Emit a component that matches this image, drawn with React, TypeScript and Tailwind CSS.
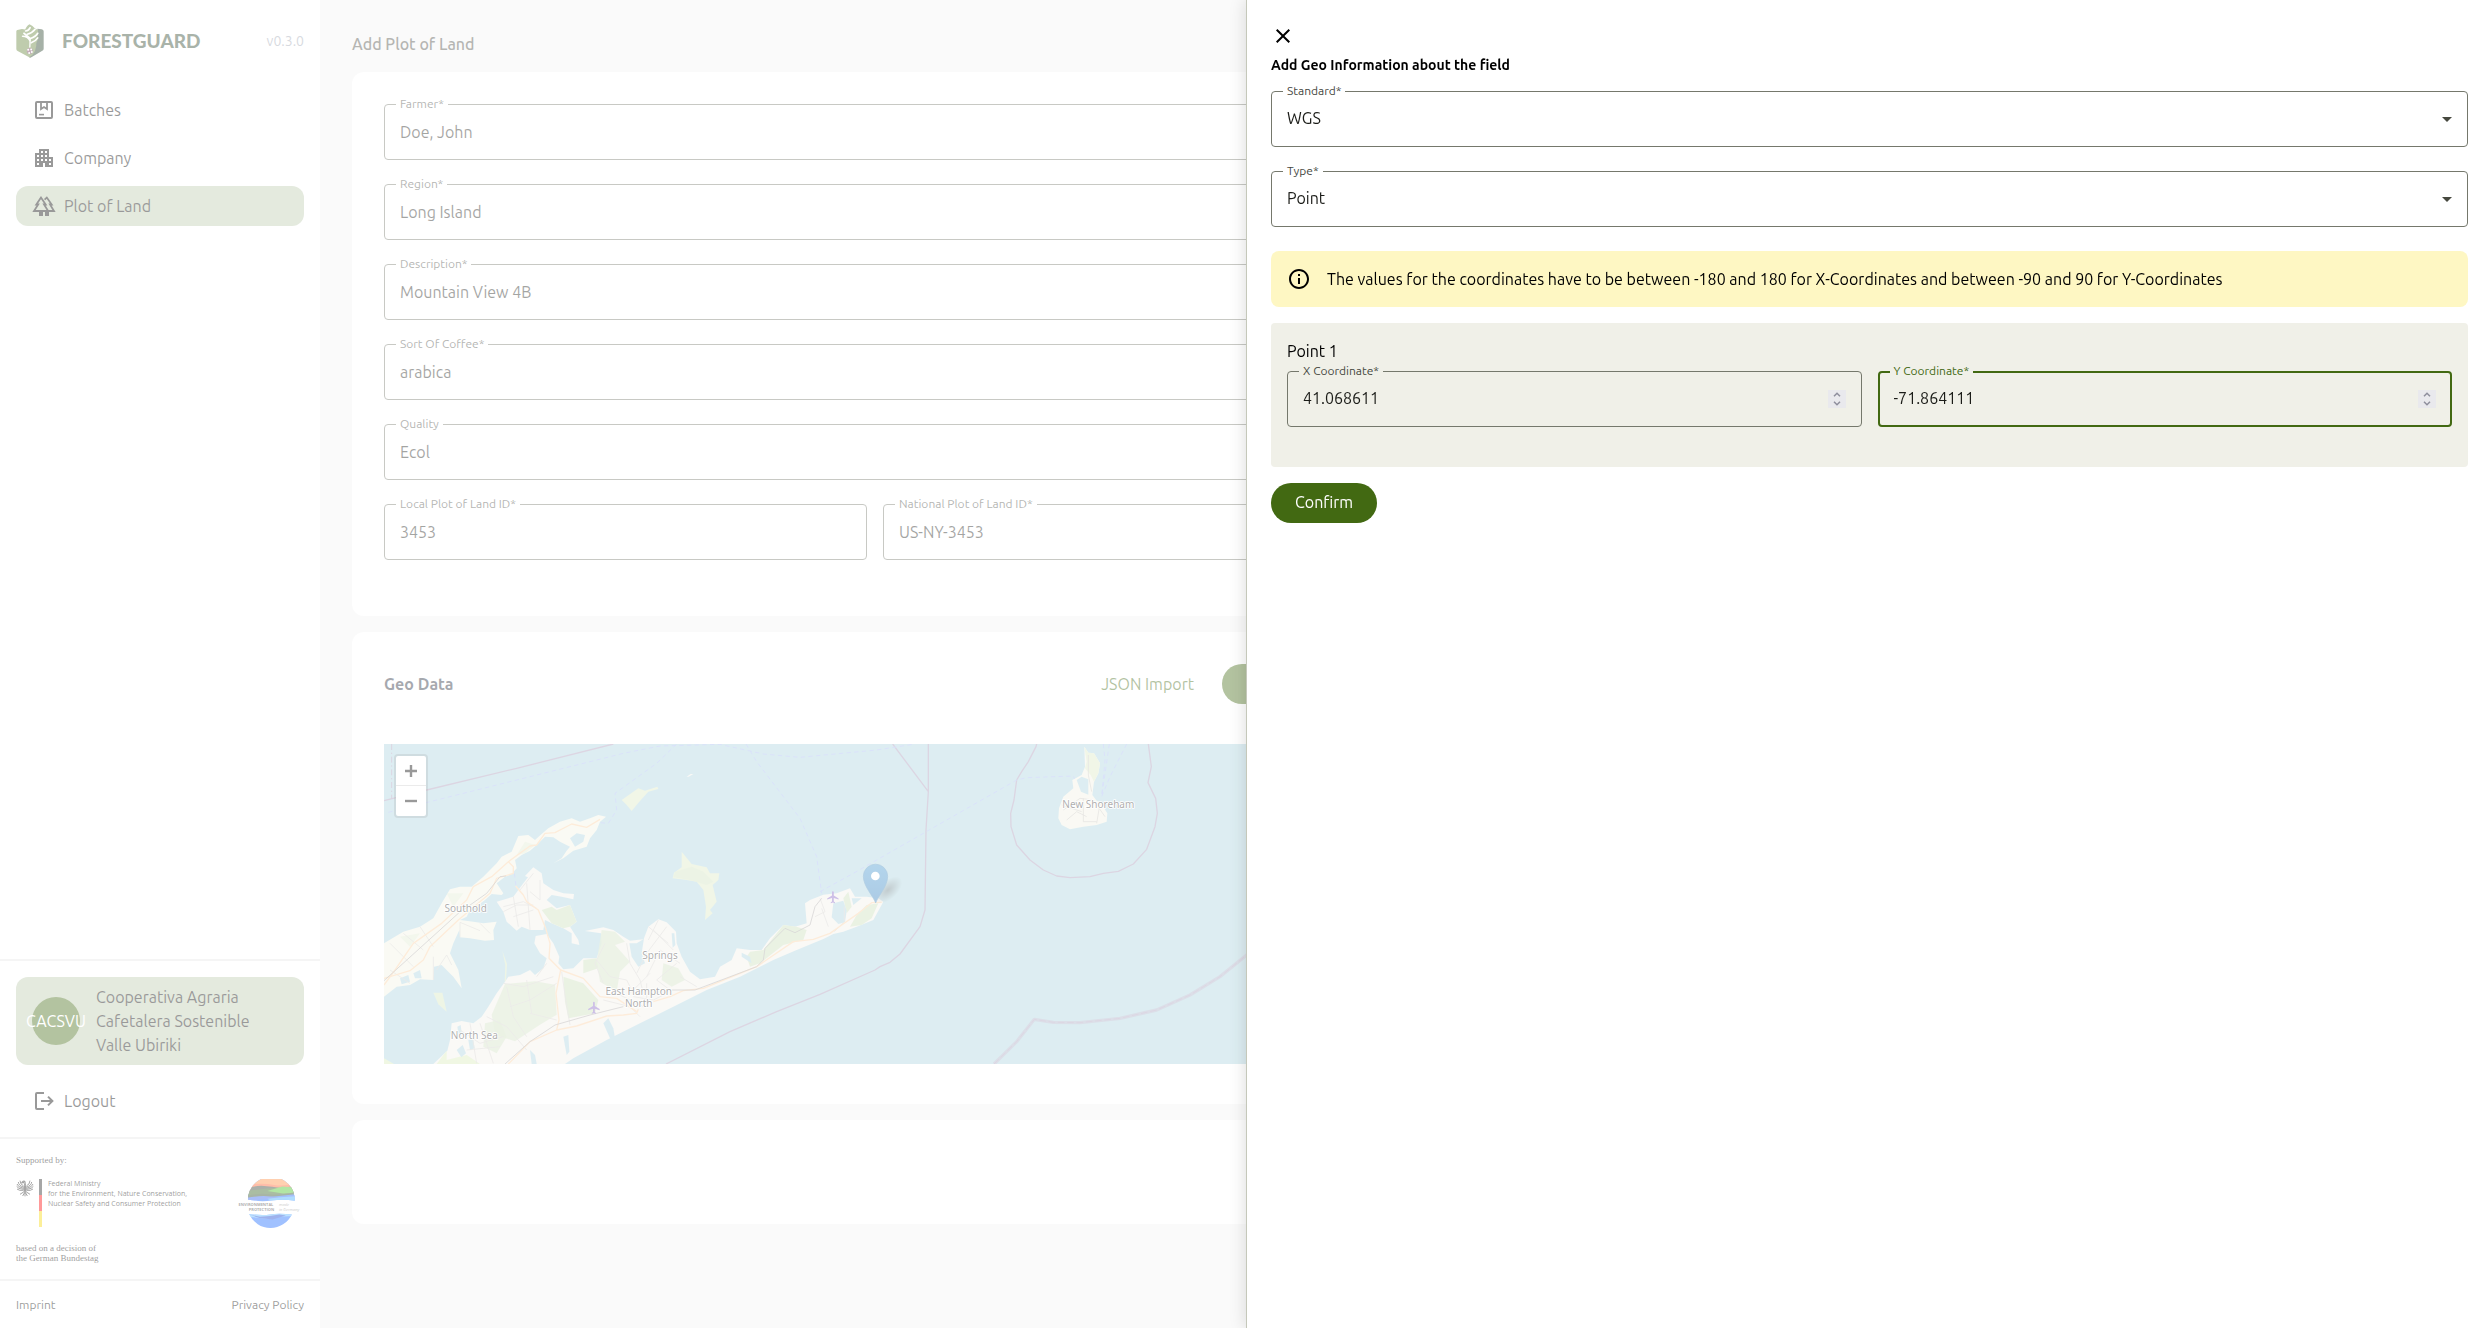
import { useState, type ReactNode } from 'react';
import { MdOutlineInfo, MdClose, MdApartment } from 'react-icons/md';

type Tone = 'default' | 'focused';

function Field({ id, label, value }: { id: string; label: string; value: string }) {
  return (
    <div className="relative mb-6 min-w-0 flex-1">
      <input
        id={id}
        defaultValue={value}
        className="block h-14 w-full rounded border border-[#75786c] bg-transparent px-[15px] text-[#1b1c18] outline-none"
      />
      <label htmlFor={id} className="absolute -top-2 left-3 bg-white px-1 text-xs text-[#46483f]">
        {label}
      </label>
    </div>
  );
}

function SelectField({ id, label, options }: { id: string; label: string; options: string[] }) {
  return (
    <div className="relative mb-6">
      <select
        id={id}
        className="block h-14 w-full appearance-none rounded border border-[#75786c] bg-transparent px-[15px] pb-0.5 text-[#1b1c18] outline-none"
      >
        {options.map((o) => (
          <option key={o}>{o}</option>
        ))}
      </select>
      <label htmlFor={id} className="absolute -top-2 left-3 bg-white px-1 text-xs text-[#46483f]">
        {label}
      </label>
      <svg viewBox="0 0 10 5" className="pointer-events-none absolute top-[26px] right-4 h-[5px] w-2.5" fill="#46483f">
        <path d="M0 0h10L5 5z" />
      </svg>
    </div>
  );
}

function NumberField({ id, label, initial, tone = 'default' }: { id: string; label: string; initial: string; tone?: Tone }) {
  const [value, setValue] = useState(initial);
  const step = (d: number) => setValue((v) => String(Number((Number(v) + d).toFixed(6))));
  const focused = tone === 'focused';
  return (
    <div className="relative mb-6 min-w-0 flex-1">
      <input
        id={id}
        type="number"
        step="any"
        value={value}
        onChange={(e) => setValue(e.target.value)}
        className={`block h-14 w-full rounded bg-transparent pr-12 pb-0.5 text-[#1b1c18] outline-none [appearance:textfield] [&::-webkit-inner-spin-button]:appearance-none ${
          focused ? 'border-2 border-[#426912] pl-3.5' : 'border border-[#75786c] pl-[15px]'
        }`}
      />
      <label
        htmlFor={id}
        className={`absolute -top-2 left-3 bg-[#f0f0e8] px-1 text-xs ${focused ? 'text-[#426912]' : 'text-[#46483f]'}`}
      >
        {label}
      </label>
      <div className="absolute top-[19px] right-4 flex h-[18px] w-[18px] flex-col items-center justify-between bg-[#e9e9ed] py-0.5">
        <button type="button" aria-label={`Increase ${label}`} onClick={() => step(1)} className="block">
          <svg viewBox="0 0 8 5" className="h-[5px] w-2" fill="none" stroke="#8f8f9d" strokeWidth="1.5">
            <path d="M1 4.2 4 1.2l3 3" />
          </svg>
        </button>
        <button type="button" aria-label={`Decrease ${label}`} onClick={() => step(-1)} className="block">
          <svg viewBox="0 0 8 5" className="h-[5px] w-2" fill="none" stroke="#8f8f9d" strokeWidth="1.5">
            <path d="m1 .8 3 3 3-3" />
          </svg>
        </button>
      </div>
    </div>
  );
}

function NavItem({ icon, children, active = false }: { icon: ReactNode; children: ReactNode; active?: boolean }) {
  return (
    <a
      href="#"
      className={`flex h-10 items-center gap-2 rounded-xl px-4 text-black ${active ? 'bg-[#bccaad]' : ''}`}
    >
      {icon}
      {children}
    </a>
  );
}

const BatchIcon = () => (
  <svg viewBox="0 0 24 24" className="h-6 w-6" fill="none" stroke="currentColor" strokeWidth="2">
    <rect x="4" y="4" width="16" height="16" rx="1" />
    <path d="M9 4v7l3-2 3 2V4" strokeWidth="1.8" />
    <path d="M7 16.6h5" strokeWidth="1.6" />
  </svg>
);

const ForestIcon = () => (
  <svg viewBox="0 0 24 24" className="h-6 w-6 overflow-visible" fill="none" stroke="currentColor" strokeWidth="1.8">
    <path d="M9 3.6 4.3 10.500H6.200L2 17h14.200L12 10.500h1.700z" />
    <path d="m12.600 5.600 2.200-2 4.900 6.900H18l4 6.500h-6" />
    <path d="M9 17v5M15 17v5" strokeWidth="4" />
  </svg>
);

const LogoutIcon = () => (
  <svg viewBox="0 0 24 24" className="h-6 w-6" fill="none" stroke="currentColor" strokeWidth="2">
    <path d="M12 4H5a1 1 0 0 0-1 1v14a1 1 0 0 0 1 1h7" />
    <path d="M9 12h11M16 7.6l4.4 4.4-4.4 4.4" />
  </svg>
);

const BrandMark = () => (
  <svg viewBox="20 22 85 103" className="h-[34px] w-7">
    <path d="M21 44q0-3 3-4l14-3 47 8v62l-22 17-38-20q-4-2-4-6z" fill="#5f7f33" />
    <path d="M85 36l13 2q6 1 6 6v53q0 4-4 6L68 122q-5 3-8 1 24-12 22-50z" fill="#213d24" />
    <path d="M47 42q4-14 14-19 10 4 16 12l10 6-2 32-20 34-4-20-16-24z" fill="#5f7f33" />
    <g fill="none" stroke="#fff" strokeWidth="5" strokeLinecap="round">
      <path d="M49 43q10-1 14-10M54 53q16-4 24-15M64 66q16-6 22-16M66 79q14-5 20-15" />
      <path d="M40 59q16 0 22 13M44 50l17 14" />
      <path d="M63 66l-1 26" strokeWidth="4" />
    </g>
    <circle cx="62" cy="104" r="9" fill="#6b3350" />
    <g fill="#fff">
      <circle cx="57" cy="100" r="3" />
      <circle cx="66" cy="99" r="3" />
      <circle cx="68" cy="107" r="3" />
      <circle cx="60" cy="110" r="3" />
    </g>
  </svg>
);

const Eagle = () => (
  <svg viewBox="0 0 54 54" className="h-[18px] w-[18px]" fill="none" stroke="#222">
    <path d="M27 14q5 8 4 18l-4 12-4-12q-1-10 4-18z" fill="#222" strokeWidth="2" />
    <path d="M27 18V9q-3-5-7-1l-2 3 6 0" strokeWidth="4" />
    <path d="M22 20Q13 17 12 5M22 24Q8 20 7 9M22 28Q5 24 3 15M22 31Q6 30 2 22M22 34Q10 36 3 30" strokeWidth="3" />
    <path d="M32 20q9-3 10-15M32 24q14-4 15-15M32 28q17-4 19-13M32 31q16-1 20-9M32 34q12 2 19-4" strokeWidth="3" />
    <path d="M24 38 12 46M30 38l12 8M27 40v12M25 42l-5 9M29 42l5 9" strokeWidth="3" />
  </svg>
);

const EnvironmentMark = () => (
  <svg viewBox="712 716 198 148" className="h-[49px] w-[66px]">
    <clipPath id="globe">
      <path d="M741 778a71 71 0 0 1 142 4q-35-6-70-1t-72-3zM745 822q40 5 64 1t65 0a71 71 0 0 1-129-1z" />
    </clipPath>
    <g clipPath="url(#globe)">
      <path d="M730 710h160v160H730z" fill="#1264ff" />
      <path d="M730 710h160v50H730z" fill="#ff8a3a" />
      <path d="M750 732q40-4 70 2t60-6v14H740z" fill="#ff5a2a" />
      <path d="M735 745q30-10 55-8t50 6l45-6v20l-75 8-75 8z" fill="#2f3a2c" />
      <path d="M735 752l70-8 80-4v18l-60 6-90 4z" fill="#2c5a1a" />
      <path d="M800 752l45-13 42 3v16l-40 2z" fill="#3fc01c" />
      <path d="M735 767q40-9 70-5t80-6v6l-78 8-72 8z" fill="#26471f" />
      <path d="M735 773q45-8 75-4t80-6v6l-78 6-77 8z" fill="#2a5cf0" />
      <path d="M800 776q40-6 90-8v14h-80z" fill="#37a8ff" />
      <path d="M740 818h140v10l-50 2-30 6-60-6z" fill="#57b6ff" />
      <path d="M748 824l30 6 30-2 28-5 20 3-40 12-40-4z" fill="#0d3fd0" />
    </g>
    <g fontFamily='"Open Sans", sans-serif' fontSize="12" fill="#333">
      <text x="713" y="798" fontWeight="700">ENVIRONMENTAL</text>
      <text x="744" y="814" fontWeight="700">PROTECTION</text>
      <text x="835" y="798" fontStyle="italic" fill="#777">made</text>
      <text x="835" y="814" fontStyle="italic" fill="#777">in Germany</text>
    </g>
  </svg>
);

const PLANE = 'M21 16v-2l-8-5V3.5c0-.83-.67-1.5-1.5-1.5S10 2.67 10 3.5V9l-8 5v2l8-2.5V19l-2 1.5V22l3.5-1 3.5 1v-1.5L13 19v-5.5l8 2.5z';

function CoastMap() {
  return (
    <svg viewBox="42 42 2946 960" preserveAspectRatio="xMinYMin slice" className="block h-80 w-full bg-[#aad3df]">
      <rect x="42" y="42" width="2946" height="960" fill="#aad3df" />
      {/* land */}
      <g fill="#f2efe9">
        <path fill="#f3f3e4" d="M42 640 100 605l50-15 40-25 25-45 25-42 30-8h35l35-30 40-40 15-20 30-15 20-47 30-3 20 15 20-18 20-17 35-20 35-10 25 10 30-10 25-10 23 5-18 15-10 25-20 25-10 25-40 12-30 23-30 15 25-15 15-23 10-12-30-15-20-13-25-2-25 25-20 17-25 13-20 15 5 25-15 17-20 8-25 20 20 30-5 5-30-3-20 18-20 15-25 15-10 20-20 10 40 5 30 5 40-5-10 25 2 30-27 2-45-7-30-3-2-22-18 40-10 30 25 50 10 55-25-35-35-35-23 5-2 40-40-2-30 17-40 5-38 30z" />
        <path fill="#d5e6bf" d="M190 788h27l13 57-25-22z" />
        <path fill="#d5e6bf" d="m397 662 14 40-3 50-4 3 2-50z" />
        <path fill="#d9ecb8" d="m42 985 30 17H42z" />
        <path d="M190 1002l42-40 8-32 5-50 30-7 35 7 25-20 20-30 25-40 25-35 10-15 35-5 30-15 15 15 25-20 10-30-20-15-17-30 4-22 33-6 20 28 18 40-3 20 15 18 30-3 30-30h40l15-45-2-30-48-7 55-11 30 8 30 20 20 12 40-4-20 12-22 0 7 40 20 30 20-10-10-30 7-45 13-35 30-22 25 9 28 28 2 35 15 40 25 45 30 23 45-8 15-30 35-20 15-35 40 5h35l25-35 40-40 35 5 35-10-5-60 15-10 40-16 40-4 40-15 15 25h35l35 5 15 10-30 55-50 20-40 15-30 7-30 15-80 33-70 30-100 50-100 40-100 50-100 50-100 50-100 55-25 17z" />
        <path d="m380 515 50-15 30-40 14-18-9-4 25-26 25 18 5 30 30 20 30 10 32 2-2 16-35-8-30-5-15 15 30 25 40-10 20 50-20 15 25 40 3 15-23-5v-30l-25-15-35-15-20-10-5 30h-40l-25-10-15 12-30-27-10-30z" />
        <path fill="#dbe8c4" d="m935 365 30 37 45 10 10 18 28 0-3 20-17 15 12 50-20 25 8 10-23 20-2 25 5-65-8-50-20-25-30-5-42-5 4-17 23-16z" />
        <path fill="#dbe8c4" d="m755 210 35-25 15-10 20 7 37-12 3 7-30 8-27 30-23 28-15-18z" />
        <path d="m950 140 12-8 8 0-14 8z" />
      </g>
      {/* woods and parks */}
      <g fill="#cbdfba">
        <path d="m515 540 30-10 15 10 40-15 20 50-20 15-20 5-35-15z" />
        <path d="m405 762 90-8 60 10 5 90-50 30-75 50-60-20-10-60z" opacity=".8" />
        <path d="m580 740 60 20 45 50-10 40-80 15-10-50z" />
        <path d="m695 600 40 5 30 30-30 10 45 50-30 30-10 60-50-30-10-60z" opacity=".8" />
        <path d="m640 690 40-5 5 30-45 15z" />
        <path d="m880 700 45 15 20 35-40 20-30-20z" opacity=".8" />
        <path d="m1140 665 40-5 60-75 40 5 30 10-10 30-60 15-70 55-30 10-10-30z" />
        <path d="m1420 505 15-20 10 45-15 20zM1440 590l20-35 30-30 35-5-20 45-30 20z" />
        <path d="m230 990 60-15 40 27H200l30-40z" fill="#d9ecb8" />
        <path d="m345 880 45-10 20 50-30 50-40-20z" opacity=".8" />
        <path d="m465 335 30 10-30 25-25 5zM230 490l50 0-30 40zM90 620l60-10-30 40z" opacity=".45" />
        <path d="m915 425 50-15 35 15 30 30-20 10-50-15-50-8z" opacity=".7" />
        <path d="m570 545 30-8 14 35-20 12z" opacity=".6" />
      </g>
      {/* ponds and inlets */}
      <g fill="#aad3df">
        <path d="m1390 520 30-8 10 30-5 35-20 5-20-20z" />
        <path d="m1445 505 30 0-25 20z" />
        <path d="m600 325 20-15 25 5-5 20-25 15z" />
        <path d="m700 880 15-15 15 30 5 30-15 0z" />
        <path d="m480 960 15 15 5 27h-15z" />
        <path d="m580 920 15-5 3 50-8 10z" />
        <path d="m905 610 8 0 3 35-8 8z" />
        <path d="m1115 668 25 12 5 20-30-20z" />
        <path d="m260 960 18-15 10 25-14 12zM295 930l14-5 5 30-14 5zM262 890l10-5 4 30-10 0z" />
        <path d="m90 745 25-10 5 20-25 8zM130 730l20-10 5 25-20 0z" />
      </g>
      {/* local streets */}
      <g fill="none" stroke="#cfccc8" strokeWidth="2.5">
        <path d="M270 622v-45l60 25M200 720l30-45 15 30M330 580l30 30" />
        <path d="m400 530 60-15 40 20M430 500l15 90M470 460l10 140M510 450v60l-30-25M400 545l40-20 50 0M490 430l-40 50M430 560l60-20" />
        <path d="m680 690 40 50 50 10 20 40M705 640l-30 60 25 60M770 640l10 60 30 50 10 40M865 570l-30 60M890 590l-60 80-30 60M850 600l60 60M835 590l60 50M830 740l40-80 60 40M780 790l60-60M920 700l-60 50 40 30M930 740l50 30" />
        <path d="m400 760 60 10 90-30M420 830l60-20 80-50M410 770l20 90 40 60M470 750l15 100M575 725l10 70 15 90M480 850l80 20M300 880l20 120M270 900l60 40 70-20M330 880l40 120M350 860l60 30 60 70M290 960l100-10" />
        <path d="m700 810 80 20 30 30M740 790l80 40M790 800l60 10 40-20M830 760v60" />
        <path d="m1350 505 15 40-30 15M1355 535l20 55M1423 530v45l-30 30" />
        <path d="m530 700-30 40M60 640l70 70M100 610l60 50M150 590l40 60M190 680l0 70M60 720l60 40" />
      </g>
      {/* main roads */}
      <g fill="none" stroke="#fbd0a2" strokeWidth="4" strokeLinejoin="round">
        <path d="m42 765 33-45 55-80 85-60 75-70 20-40 55-30 50-45 65-47 20-3 25-35 30-2 50-26 45 10 40-24" />
        <path d="m42 745 78-23 40-32 20-40 85-80 95-80 20-45 50-15v-20l-15-15" />
        <path d="m437 468 23 27 10 20 35 25 22 55 13 45-3 45 35 35 68 25 50 55 50 5 60 40" />
        <path d="m572 720-14 70 9 80-7 30-80 35-65 67M560 900l60-12 90-30 50-3 40-5 5-12M850 815l50-15 40-18 60-7 160-65 110-75 60-7 50-18 35-25 50-35 40-32 30-1" />
      </g>
      <g fill="none" stroke="#a19e9c" strokeWidth="2.5">
        <path d="m42 752 223-202 85-60 40-50 18-2M405 1002l75-67 75-50 105-30 100-25M905 780h70l185-70 20-20 5-35 60-60 30 13 45-23 15-55 20-25" />
      </g>
      {/* maritime boundaries */}
      <g fill="none" stroke="#a983a9" strokeWidth="4" strokeLinejoin="round" opacity=".75">
        <path d="m42 212 128-32 270-65 290-73M888 1002l192-97 140-60 130-52 165-73 15-10 30-13 30-25 60-82 15-50 3-240 7-115V42M1675 185 1568 42" />
        <path d="M65 42v165" strokeDasharray="18 8 4 8" strokeWidth="3" />
        <path d="m2000 42-2 8-23 45-20 30-15 25-8 60-10 40 1 40 17 55 40 45 40 30 40 18 40 5 60-3 40-10 45-6 45-22 40-44 25-68 7-40-5-45-23-47 10-48-9-68" />
        <path d="m1872 1002 68-67 53-67 57 9 80 1 120-13 110-25 100-45 90-55 80-65 100-110" strokeWidth="10" opacity=".6" />
        <path d="m1872 1002 68-67 53-67 57 9 80 1 120-13 110-25 100-45 90-55 80-65 100-110" strokeWidth="2.5" strokeDasharray="20 8" />
      </g>
      {/* ferry routes */}
      <g fill="none" stroke="#a4b6f2" strokeWidth="3" strokeDasharray="13 10">
        <path d="m55 247 145-37 300-75 260-65 110-22 180-5 130 29 110 10 230-22 115-18" />
        <path d="m920 42-60 58-125 90 5 50-25 40-25-2M1128 42l32 53 130 170 50 115 15 110M433 430l5 38" />
        <path d="m1350 485 100-55 490-280 30-7 140-5 20 47" />
        <path d="m2200 42 5 48-10 110M2218 42l-23 158M2270 42l-50 98-25 60" />
      </g>
      {/* Block Island */}
      <g transform="translate(1350 0)">
        <path fill="#f2f1e3" d="m793 50 12 18 17 2 18 30-5 30-13 25-5 40 13 17 10 3 22 35-2 25-30 10-40 5-40 8-25-13-10-20 2-30 13-35 30-25-3-25 28-15 10-25z" />
        <path fill="#dbe8c4" d="m793 50 12 18 17 2 18 30-5 30-13 25-10-20-17-20 5-20z" />
        <path fill="#aad3df" d="m770 150 15-10 20 8v46l-22-9z" />
        <path fill="none" stroke="#c4c0bb" strokeWidth="2.5" d="M805 75v60l10 50M730 240l50-35 40 5 35 50M740 270l30-25 30 15M790 205v70l40 0M725 225l60 20M840 220l-10 60" />
      </g>
      <g fill="#8461c4">
        <path transform="translate(651 812) scale(1.8)" d={PLANE} />
        <path transform="translate(1368 480) scale(1.8)" d={PLANE} />
      </g>
      <g
        fontFamily='"Noto Sans", sans-serif'
        fontSize="30"
        fill="#333"
        stroke="#fff"
        strokeWidth="5"
        strokeLinejoin="round"
        paintOrder="stroke"
        textAnchor="middle"
      >
        <text x="287" y="545">Southold</text>
        <text x="870" y="687">Springs</text>
        <text x="806" y="795">East Hampton</text>
        <text x="806" y="832">North</text>
        <text x="313" y="928">North Sea</text>
        <text x="2185" y="235">New Shoreham</text>
      </g>
      {/* marker */}
      <defs>
        <linearGradient id="pin" x1="0" y1="0" x2="0" y2="1">
          <stop offset="0" stopColor="#4397cf" />
          <stop offset="1" stopColor="#2e7cbe" />
        </linearGradient>
        <radialGradient id="pinShade">
          <stop offset="0" stopColor="#000" stopOpacity=".4" />
          <stop offset="1" stopColor="#000" stopOpacity="0" />
        </radialGradient>
      </defs>
      <ellipse cx="1554" cy="480" rx="52" ry="28" fill="url(#pinShade)" transform="rotate(-42 1554 480)" />
      <path
        d="M1517 519c-8-22-37-50-37-80a36.500 36.500 0 0 1 73 0c0 30-28 58-36 80z"
        fill="url(#pin)"
        stroke="#3a80b3"
        strokeWidth="2"
      />
      <circle cx="1516" cy="438" r="13" fill="#fff" />
    </svg>
  );
}

function Sidebar() {
  return (
    <aside className="flex w-80 shrink-0 flex-col bg-white">
      <div className="mt-6 mb-8 flex h-[34px] items-center px-4">
        <BrandMark />
        <span className="ml-[18px] font-['Lato'] text-[19px] font-black text-[#28432a]">FORESTGUARD</span>
        <span className="ml-auto text-sm text-[#9ca3af]">v0.3.0</span>
      </div>
      <nav className="flex flex-col gap-2 px-4">
        <NavItem icon={<BatchIcon />}>Batches</NavItem>
        <NavItem icon={<MdApartment className="h-6 w-6" />}>Company</NavItem>
        <NavItem icon={<ForestIcon />} active>
          Plot of Land
        </NavItem>
      </nav>
      <div className="mt-auto flex flex-col gap-4 border-t-2 border-[#e5e5e5] p-4">
        <div className="flex items-center gap-4 rounded-xl bg-[#bccaad] px-4 py-2">
          <div className="flex h-12 w-12 shrink-0 items-center justify-center rounded-full bg-[#426912] text-white">CACSVU</div>
          <div className="text-black">
            Cooperativa Agraria
            <br />
            Cafetalera Sostenible
            <br />
            Valle Ubiriki
          </div>
        </div>
        <NavItem icon={<LogoutIcon />}>Logout</NavItem>
      </div>
      <div className="flex items-start justify-between border-t-2 border-[#e5e5e5] p-4 text-black">
        <div className="flex flex-col font-['Liberation_Serif'] text-[9px] leading-[10px] text-black">
          <p>Supported by:</p>
          <div className="mt-3.5 mb-4 flex items-start">
            <Eagle />
            <div className="ml-[5px] flex h-12 w-[3px] flex-col">
              <div className="flex-1 bg-[#222]" />
              <div className="flex-1 bg-[#f00]" />
              <div className="flex-1 bg-[#f8d800]" />
            </div>
            <p className="ml-[6px] font-['Open_Sans'] text-[7px] leading-[10px] font-medium whitespace-nowrap">
              Federal Ministry
              <br />
              for the Environment, Nature Conservation,
              <br />
              Nuclear Safety and Consumer Protection
            </p>
          </div>
          <p>
            based on a decision of
            <br />
            the German Bundestag
          </p>
        </div>
        <div className="mt-6 w-[66px]">
          <EnvironmentMark />
        </div>
      </div>
      <footer className="flex h-[49px] items-center justify-between border-t-2 border-[#e5e5e5] px-4 text-xs text-black">
        <a href="#">Imprint</a>
        <a href="#">Privacy Policy</a>
      </footer>
    </aside>
  );
}

function PlotForm() {
  return (
    <main className="min-w-0 flex-1 bg-[#f3f3f3] p-8">
      <h1 className="mb-4 font-medium text-[#46483f]">Add Plot of Land</h1>
      <div className="grid grid-cols-2 gap-4">
        <div className="flex min-w-0 flex-col gap-4">
          <section className="rounded-xl bg-white p-8">
            <Field id="farmer" label="Farmer*" value="Doe, John" />
            <Field id="region" label="Region*" value="Long Island" />
            <Field id="description" label="Description*" value="Mountain View 4B" />
            <Field id="sort" label="Sort Of Coffee*" value="arabica" />
            <Field id="quality" label="Quality" value="Ecol" />
            <div className="flex gap-4">
              <Field id="local-id" label="Local Plot of Land ID*" value="3453" />
              <Field id="national-id" label="National Plot of Land ID*" value="US-NY-3453" />
            </div>
          </section>
          <section className="rounded-xl bg-white px-8 pt-8 pb-10">
            <div className="mb-10 flex items-center gap-4">
              <h2 className="mr-auto font-bold text-[#1f2937]">Geo Data</h2>
              <button type="button" className="h-10 px-3 text-[#426912]">
                JSON Import
              </button>
              <button type="button" aria-label="Edit geo data" className="h-10 w-36 rounded-full bg-[#426912]" />
            </div>
            <div className="relative">
              <CoastMap />
              <div className="absolute top-2.5 left-2.5 flex flex-col divide-y divide-[#ccc] rounded border-2 border-black/20 bg-white bg-clip-padding text-black">
                <button type="button" aria-label="Zoom in" className="flex h-[30px] w-[30px] items-center justify-center">
                  <svg viewBox="0 0 12 12" className="h-3 w-3" stroke="currentColor" strokeWidth="2.400">
                    <path d="M6 0v12M0 6h12" />
                  </svg>
                </button>
                <button type="button" aria-label="Zoom out" className="flex h-[30px] w-[30px] items-center justify-center">
                  <svg viewBox="0 0 12 12" className="h-3 w-3" stroke="currentColor" strokeWidth="2.400">
                    <path d="M0 6h12" />
                  </svg>
                </button>
              </div>
            </div>
          </section>
          <section className="h-26 rounded-xl bg-white" />
        </div>
      </div>
    </main>
  );
}

function GeoDrawer() {
  return (
    <div
      role="dialog"
      aria-labelledby="drawer-title"
      className="fixed inset-y-0 right-0 w-1/2 border-l border-[#c5c8ba] bg-white p-6 shadow-[0_0_16px_rgba(0,0,0,0.15)]"
    >
      <button type="button" aria-label="Close" className="block h-6 w-6">
        <MdClose className="h-6 w-6" />
      </button>
      <h2 id="drawer-title" className="mt-[9px] mb-[18px] text-sm leading-4 font-semibold text-black">
        Add Geo Information about the field
      </h2>
      <SelectField id="standard" label="Standard*" options={['WGS', 'UTM']} />
      <SelectField id="type" label="Type*" options={['Point', 'Polygon']} />
      <div className="mb-4 flex h-14 items-center gap-4 rounded-lg bg-[#fef7c3] px-4 text-black">
        <MdOutlineInfo className="h-6 w-6 shrink-0" />
        The values for the coordinates have to be between -180 and 180 for X-Coordinates and between -90 and 90 for Y-Coordinates
      </div>
      <div className="mb-4 rounded bg-[#f0f0e8] p-4">
        <h3 className="mb-2 text-black">Point 1</h3>
        <div className="flex gap-4">
          <NumberField id="x-coordinate" label="X Coordinate*" initial="41.068611" />
          <NumberField id="y-coordinate" label="Y Coordinate*" initial="-71.864111" tone="focused" />
        </div>
      </div>
      <button type="button" className="h-10 rounded-full bg-[#426912] px-6 pb-0.5 text-white">
        Confirm
      </button>
    </div>
  );
}

export default function App() {
  return (
    <div className="flex min-h-screen font-['Ubuntu','Noto_Sans',sans-serif] text-base">
      <Sidebar />
      <PlotForm />
      <div className="pointer-events-none fixed inset-0 bg-white/60" />
      <GeoDrawer />
    </div>
  );
}
